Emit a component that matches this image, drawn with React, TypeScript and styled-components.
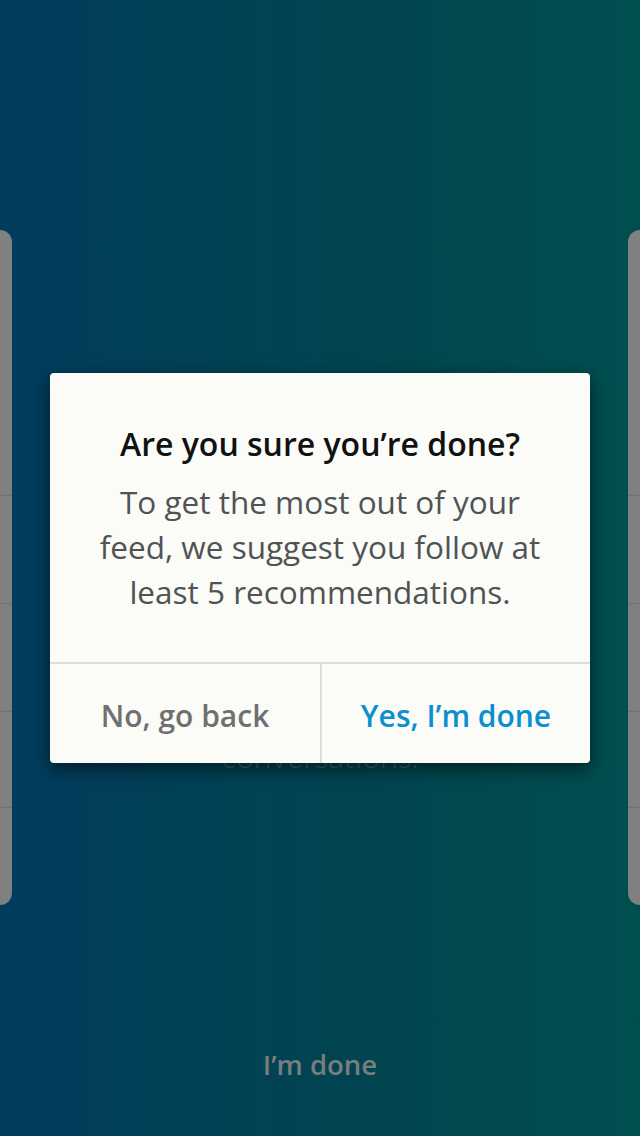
import React from "react";
import styled, { createGlobalStyle } from "styled-components";

const GlobalStyle = createGlobalStyle`
  html, body { margin: 0; padding: 0; }
  body { font-family: "Open Sans", "Lato", sans-serif; }
  * { box-sizing: border-box; }
`;

const Screen = styled.div`
  position: relative;
  width: 640px;
  height: 1136px;
  overflow: hidden;
  background: linear-gradient(90deg, #023c5d 0%, #01454f 60%, #004f4f 100%);
  display: flex;
  flex-direction: column;
  align-items: center;
`;

const Carousel = styled.div`
  margin-top: 230px;
  width: 640px;
  height: 675px;
  display: flex;
  justify-content: center;
  overflow: hidden;
`;

const SideCard = styled.div`
  flex: 0 0 560px;
  height: 675px;
  border-radius: 12px;
  background: #808080;
  display: flex;
  flex-direction: column;
`;

const CardRow = styled.div<{ $h: number }>`
  height: ${(p) => p.$h}px;
  border-bottom: 1px solid #727272;
  flex-shrink: 0;
`;

const Slide = styled.div`
  flex: 0 0 616px;
  height: 675px;
  display: flex;
  flex-direction: column;
  align-items: center;
  padding-top: 506px;
`;

const GhostText = styled.div`
  font-family: "Lato", sans-serif;
  font-weight: 300;
  font-size: 32px;
  line-height: 40px;
  color: #4a5c63;
`;

const Footer = styled.div`
  margin-top: 141px;
  font-family: "Open Sans", sans-serif;
  font-weight: 600;
  font-size: 27.5px;
  color: #7a7d7f;
`;

const Overlay = styled.div`
  position: absolute;
  inset: 0;
  display: flex;
  align-items: center;
  justify-content: center;
`;

const Dialog = styled.div`
  width: 540px;
  height: 390px;
  background: #fbfbf7;
  border-radius: 4px;
  box-shadow: 0 6px 18px rgba(0, 0, 0, 0.55);
  display: flex;
  flex-direction: column;
  overflow: hidden;
`;

const Body = styled.div`
  flex: 0 0 291px;
  display: flex;
  flex-direction: column;
  align-items: center;
  padding: 51px 20px 0;
  text-align: center;
  border-bottom: 2px solid #dcdcda;
`;

const Title = styled.h2`
  margin: 0;
  font-family: "Open Sans", sans-serif;
  font-weight: 600;
  font-size: 32px;
  line-height: 40px;
  color: #111;
  white-space: nowrap;
`;

const Message = styled.p`
  margin: 15px 0 0;
  font-family: "Open Sans", sans-serif;
  font-weight: 400;
  font-size: 31.5px;
  line-height: 45px;
  color: #505354;
  white-space: nowrap;
`;

const Actions = styled.div`
  flex: 1;
  display: grid;
  grid-template-columns: 1fr 1fr;
`;

const Action = styled.button<{ $primary?: boolean }>`
  border: none;
  background: transparent;
  padding: 3px 0 0;
  font-family: "Open Sans", sans-serif;
  font-weight: 600;
  font-size: 30px;
  color: ${(p) => (p.$primary ? "#0a8fd1" : "#707070")};
  border-left: ${(p) => (p.$primary ? "2px solid #dcdcda" : "none")};
  cursor: pointer;
`;

export default function App() {
  return (
    <>
      <GlobalStyle />
      <Screen>
        <Carousel>
          <SideCard>
            <CardRow $h={266} />
            <CardRow $h={108} />
            <CardRow $h={108} />
            <CardRow $h={96} />
          </SideCard>
          <Slide>
            <GhostText>conversations.</GhostText>
          </Slide>
          <SideCard>
            <CardRow $h={266} />
            <CardRow $h={108} />
            <CardRow $h={108} />
            <CardRow $h={96} />
          </SideCard>
        </Carousel>
        <Footer>I’m done</Footer>
        <Overlay>
          <Dialog role="dialog">
            <Body>
              <Title>Are you sure you’re done?</Title>
              <Message>
                To get the most out of your
                <br />
                feed, we suggest you follow at
                <br />
                least 5 recommendations.
              </Message>
            </Body>
            <Actions>
              <Action>No, go back</Action>
              <Action $primary>Yes, I’m done</Action>
            </Actions>
          </Dialog>
        </Overlay>
      </Screen>
    </>
  );
}
